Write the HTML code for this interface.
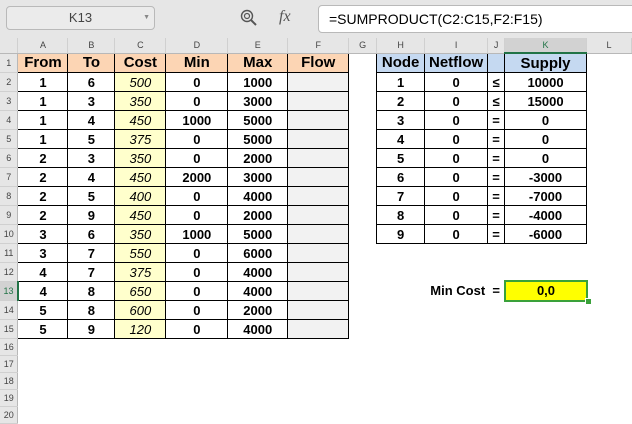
<!DOCTYPE html>
<html><head><meta charset="utf-8"><style>
body{margin:0;width:632px;height:413px;overflow:hidden;background:#fff;font-family:"Liberation Sans",Arial,sans-serif;position:relative}
#tb{position:absolute;left:0;top:0;width:632px;height:38px;background:#e6e6e6}
#nb{position:absolute;left:6px;top:6px;width:147px;height:22px;border:1px solid #b9b9b9;border-radius:4px;background:#ebebeb;font-size:13px;color:#444;text-align:center;line-height:22px}
#nb span{position:absolute;right:4px;top:0;font-size:7px;color:#888}
#fx{position:absolute;left:279px;top:8px;font-family:"Liberation Serif",serif;font-style:italic;font-size:16px;color:#555}
#fb{position:absolute;left:318px;top:5px;width:330px;height:26px;border:1px solid #b9b9b9;border-radius:4px;background:#fff;font-size:14px;line-height:26px;padding-left:10px;color:#000}
table{position:absolute;left:0;top:38px;border-collapse:collapse;table-layout:fixed}
td{padding:0;text-align:center;font-weight:bold;font-size:13px;border:none;overflow:hidden;white-space:nowrap}
tr.ch td{height:14px;background:#e6e6e6;font-weight:normal;font-size:9px;color:#444;border-right:1px solid #d0d0d0;border-bottom:1px solid #b8b8b8}
tr.r td{height:18px}
tr.s td{height:16px}
td.rh{background:#e6e6e6;font-weight:normal;font-size:9px;color:#444;border-bottom:1px solid #d0d0d0;border-right:1px solid #b8b8b8}
td.b{border:1px solid #000}
td.h{background:#fcd5b4;font-size:15px}
td.n{background:#c5d9f1;font-size:15px}
td.c{background:#ffffcc;font-style:italic;font-weight:normal;font-size:13px}
td.f{background:#f2f2f2}
</style></head><body>
<div id="tb">
<div id="nb">K13<span>▼</span></div>
<svg style="position:absolute;left:240px;top:9px" width="18" height="18" viewBox="0 0 18 18"><circle cx="7" cy="7" r="5.5" fill="none" stroke="#555" stroke-width="1.4"/><circle cx="7" cy="7" r="2.5" fill="none" stroke="#555" stroke-width="1.2"/><path d="M11 11 L16 16" stroke="#555" stroke-width="2"/></svg>
<div id="fx">fx</div>
<div id="fb">=SUMPRODUCT(C2:C15,F2:F15)</div>
</div>
<table>
<colgroup><col style="width:18px"><col style="width:50px"><col style="width:47px"><col style="width:51px"><col style="width:62px"><col style="width:60px"><col style="width:61px"><col style="width:28px"><col style="width:48px"><col style="width:63px"><col style="width:17px"><col style="width:82px"><col style="width:45px"></colgroup>
<tr class="ch"><td style="background:#e6e6e6"></td><td>A</td><td>B</td><td>C</td><td>D</td><td>E</td><td>F</td><td>G</td><td>H</td><td>I</td><td>J</td><td style="background:#d2d2d2;color:#217346;border-bottom:2px solid #217346">K</td><td>L</td></tr>
<tr class="r"><td class="rh">1</td><td class="b h">From</td><td class="b h">To</td><td class="b h">Cost</td><td class="b h">Min</td><td class="b h">Max</td><td class="b h">Flow</td><td></td><td class="b n">Node</td><td class="b n">Netflow</td><td class="b n"></td><td class="b n">Supply</td><td></td></tr>
<tr class="r"><td class="rh">2</td><td class="b">1</td><td class="b">6</td><td class="b c">500</td><td class="b">0</td><td class="b">1000</td><td class="b f"></td><td></td><td class="b">1</td><td class="b">0</td><td class="b">≤</td><td class="b">10000</td><td></td></tr>
<tr class="r"><td class="rh">3</td><td class="b">1</td><td class="b">3</td><td class="b c">350</td><td class="b">0</td><td class="b">3000</td><td class="b f"></td><td></td><td class="b">2</td><td class="b">0</td><td class="b">≤</td><td class="b">15000</td><td></td></tr>
<tr class="r"><td class="rh">4</td><td class="b">1</td><td class="b">4</td><td class="b c">450</td><td class="b">1000</td><td class="b">5000</td><td class="b f"></td><td></td><td class="b">3</td><td class="b">0</td><td class="b">=</td><td class="b">0</td><td></td></tr>
<tr class="r"><td class="rh">5</td><td class="b">1</td><td class="b">5</td><td class="b c">375</td><td class="b">0</td><td class="b">5000</td><td class="b f"></td><td></td><td class="b">4</td><td class="b">0</td><td class="b">=</td><td class="b">0</td><td></td></tr>
<tr class="r"><td class="rh">6</td><td class="b">2</td><td class="b">3</td><td class="b c">350</td><td class="b">0</td><td class="b">2000</td><td class="b f"></td><td></td><td class="b">5</td><td class="b">0</td><td class="b">=</td><td class="b">0</td><td></td></tr>
<tr class="r"><td class="rh">7</td><td class="b">2</td><td class="b">4</td><td class="b c">450</td><td class="b">2000</td><td class="b">3000</td><td class="b f"></td><td></td><td class="b">6</td><td class="b">0</td><td class="b">=</td><td class="b">-3000</td><td></td></tr>
<tr class="r"><td class="rh">8</td><td class="b">2</td><td class="b">5</td><td class="b c">400</td><td class="b">0</td><td class="b">4000</td><td class="b f"></td><td></td><td class="b">7</td><td class="b">0</td><td class="b">=</td><td class="b">-7000</td><td></td></tr>
<tr class="r"><td class="rh">9</td><td class="b">2</td><td class="b">9</td><td class="b c">450</td><td class="b">0</td><td class="b">2000</td><td class="b f"></td><td></td><td class="b">8</td><td class="b">0</td><td class="b">=</td><td class="b">-4000</td><td></td></tr>
<tr class="r"><td class="rh">10</td><td class="b">3</td><td class="b">6</td><td class="b c">350</td><td class="b">1000</td><td class="b">5000</td><td class="b f"></td><td></td><td class="b">9</td><td class="b">0</td><td class="b">=</td><td class="b">-6000</td><td></td></tr>
<tr class="r"><td class="rh">11</td><td class="b">3</td><td class="b">7</td><td class="b c">550</td><td class="b">0</td><td class="b">6000</td><td class="b f"></td><td></td><td></td><td></td><td></td><td></td><td></td></tr>
<tr class="r"><td class="rh">12</td><td class="b">4</td><td class="b">7</td><td class="b c">375</td><td class="b">0</td><td class="b">4000</td><td class="b f"></td><td></td><td></td><td></td><td></td><td></td><td></td></tr>
<tr class="r"><td class="rh" style="background:#d2d2d2;color:#217346;border-right:2px solid #217346">13</td><td class="b">4</td><td class="b">8</td><td class="b c">650</td><td class="b">0</td><td class="b">4000</td><td class="b f"></td><td></td><td></td><td></td><td></td><td></td><td></td></tr>
<tr class="r"><td class="rh">14</td><td class="b">5</td><td class="b">8</td><td class="b c">600</td><td class="b">0</td><td class="b">2000</td><td class="b f"></td><td></td><td></td><td></td><td></td><td></td><td></td></tr>
<tr class="r"><td class="rh">15</td><td class="b">5</td><td class="b">9</td><td class="b c">120</td><td class="b">0</td><td class="b">4000</td><td class="b f"></td><td></td><td></td><td></td><td></td><td></td><td></td></tr>
<tr class="s"><td class="rh">16</td><td colspan="12"></td></tr>
<tr class="s"><td class="rh">17</td><td colspan="12"></td></tr>
<tr class="s"><td class="rh">18</td><td colspan="12"></td></tr>
<tr class="s"><td class="rh">19</td><td colspan="12"></td></tr>
<tr class="s"><td class="rh">20</td><td colspan="12"></td></tr>
</table>
<div style="position:absolute;left:410px;top:283px;width:90px;text-align:right;font-weight:bold;font-size:13px">Min Cost&nbsp; =</div>
<div style="position:absolute;left:504px;top:280px;width:80px;height:18px;background:#ffff00;border:2px solid #3aa13a;text-align:center;font-weight:bold;font-size:13px;line-height:18px">0,0</div>
<div style="position:absolute;left:585px;top:298px;width:5px;height:5px;background:#3aa13a;border:1px solid #fff"></div>
</body></html>
